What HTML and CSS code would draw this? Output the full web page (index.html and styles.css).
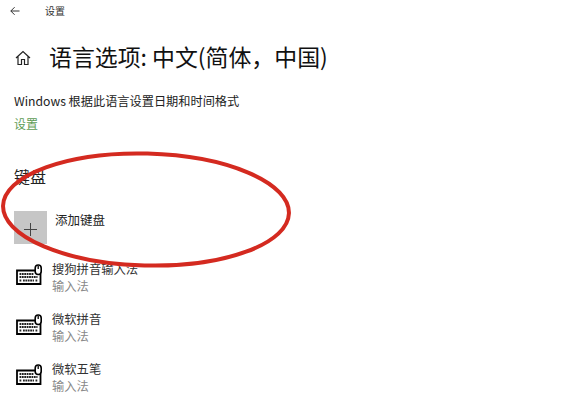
FILE: index.html
```html
<!DOCTYPE html>
<html lang="zh-CN">
<head>
<meta charset="utf-8">
<title>设置</title>
<link rel="stylesheet" href="styles.css">
</head>
<body>
<div class="page">
  <header class="topbar">
    <svg class="back" viewBox="0 0 10 10" aria-hidden="true"><path d="M9.5 5H.8M4.6 1.2.8 5l3.8 3.8"/></svg>
    <span class="app">设置</span>
  </header>
  <div class="heading">
    <svg class="home" viewBox="0 0 16 16" aria-hidden="true"><path d="M1 8 8 1.5 15 8M3 6.5V14.5H6.5V9.5H9.5V14.5H13V6.5"/></svg>
    <h1>语言选项: 中文(简体，中国)</h1>
  </div>
  <p class="desc">Windows 根据此语言设置日期和时间格式</p>
  <a class="link">设置</a>
  <h2>键盘</h2>
  <div class="add">
    <div class="tile"><svg viewBox="0 0 13 13" aria-hidden="true"><path d="M6.5 0V13M0 6.5H13"/></svg></div>
    <span class="add-label">添加键盘</span>
  </div>
  <ul class="list">
    <li class="item">
      <svg class="kb" viewBox="0 0 26 21" aria-hidden="true"><use href="#kbd"/></svg>
      <div><div class="name">搜狗拼音输入法</div><div class="sub">输入法</div></div>
    </li>
    <li class="item">
      <svg class="kb" viewBox="0 0 26 21" aria-hidden="true"><use href="#kbd"/></svg>
      <div><div class="name">微软拼音</div><div class="sub">输入法</div></div>
    </li>
    <li class="item">
      <svg class="kb" viewBox="0 0 26 21" aria-hidden="true"><use href="#kbd"/></svg>
      <div><div class="name">微软五笔</div><div class="sub">输入法</div></div>
    </li>
  </ul>
  <svg class="defs" aria-hidden="true">
    <symbol id="kbd" viewBox="0 0 26 21">
      <path d="M19 6.5H1V20H24.5V10" fill="none" stroke="#000" stroke-width="1.8"/>
      <rect x="19.2" y="1" width="6" height="9.5" rx="3" fill="#fff" stroke="#000" stroke-width="1.6"/>
      <path d="M22.2 2V5" stroke="#000" stroke-width="1.3"/>
      <path d="M3.5 10H18M3.5 13H21.5M3.5 16.5H5.5M7 16.5H18M19.5 16.5H21.5" stroke="#222" stroke-width="1.8" stroke-dasharray="1.8 .6"/>
    </symbol>
  </svg>
  <svg class="ring" viewBox="0 0 575 400" aria-hidden="true">
    <ellipse cx="146" cy="209.5" rx="143" ry="56" transform="rotate(1.5 146 209.5)"/>
  </svg>
</div>
</body>
</html>
```
FILE: styles.css
```css
* { box-sizing: border-box; }
html, body { margin: 0; padding: 0; background: #fff; }
body {
  font-family: "Noto Sans CJK SC", "Noto Sans", sans-serif;
  color: #1c1c1c;
  overflow: hidden;
}
.page {
  position: relative;
  width: 575px;
  height: 400px;
  overflow: hidden;
  padding-left: 14px;
}
.topbar {
  display: flex;
  align-items: center;
  height: 22px;
  margin-left: -4px;
}
.back { width: 10px; height: 10px; fill: none; stroke: #333; stroke-width: 1; }
.app { margin-left: 25px; font-size: 10px; line-height: 22px; color: #333; }
.heading {
  display: flex;
  align-items: center;
  margin-top: 17px;
  height: 34px;
}
.home { width: 16px; height: 16px; margin-left: 1px; margin-top: 3px; fill: none; stroke: #222; stroke-width: 1.2; }
h1 {
  margin: 0 0 0 18px;
  font-size: 22.9px;
  line-height: 34px;
  font-weight: 400;
  color: #111;
  white-space: nowrap;
}
.desc { margin: 19px 0 0; font-size: 12.2px; line-height: 18px; color: #222; }
.link { display: block; margin-top: 5px; font-size: 12px; line-height: 18px; color: #5d9c55; }
h2 { margin: 31px 0 0; font-size: 16px; line-height: 24px; font-weight: 400; color: #222; }
.add { display: flex; align-items: flex-start; margin-top: 23px; height: 33px; }
.tile {
  width: 33px;
  height: 33px;
  background: #c6c6c6;
  display: flex;
  align-items: center;
  justify-content: center;
}
.tile svg { width: 13px; height: 13px; fill: none; stroke: #444; stroke-width: 1; margin-top: 3px; }
.add-label { margin: 0 0 0 8px; font-size: 12.5px; line-height: 18px; color: #222; }
.list { list-style: none; margin: 17px 0 0 2px; padding: 0; }
.item { display: flex; height: 50px; }
.kb { width: 26px; height: 21px; margin-top: 3px; margin-right: 10px; }
.name { font-size: 12.3px; line-height: 17px; color: #333; }
.sub { font-size: 12.3px; line-height: 17px; color: #888; }
.defs { position: absolute; width: 0; height: 0; }
.ring { position: absolute; left: 0; top: 0; width: 575px; height: 400px; pointer-events: none; }
.ring ellipse { fill: none; stroke: #d42a20; stroke-width: 4; }
```
